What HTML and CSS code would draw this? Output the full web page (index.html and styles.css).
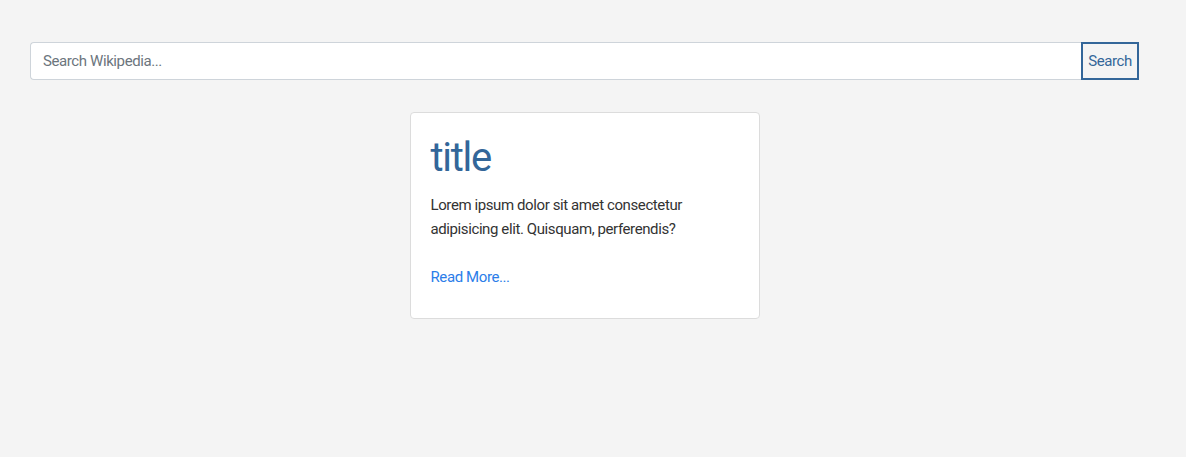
FILE: index.html
```html
<!DOCTYPE html>
<html>
<head>
<meta charset="utf-8">
<link rel="stylesheet" href="styles.css">
</head>
<body>
<div class="page">
  <form class="search">
    <input class="search-input" type="text" placeholder="Search Wikipedia...">
    <button class="search-btn" type="button">Search</button>
  </form>
  <div class="results">
    <div class="card">
      <h2 class="card-title">title</h2>
      <p class="card-text">Lorem ipsum dolor sit amet consectetur adipisicing elit. Quisquam, perferendis?</p>
      <a class="card-link" href="#">Read More...</a>
    </div>
  </div>
</div>
</body>
</html>
```
FILE: styles.css
```css
html, body {
  margin: 0;
  padding: 0;
  background: #f4f4f4;
  font-family: Roboto, "Liberation Sans", sans-serif;
}
.page {
  padding: 42px 47px 0 30px;
}
.search {
  display: flex;
  margin: 0;
}
.search-input {
  flex: 1;
  height: 38px;
  box-sizing: border-box;
  border: 1px solid #ced4da;
  border-right: none;
  border-radius: 4px 0 0 4px;
  padding: 0 12px;
  font-family: Roboto, sans-serif;
  font-size: 15px;
  letter-spacing: -0.4px;
  color: #495057;
  background: #fff;
  outline: none;
}
.search-input::placeholder {
  color: #6c757d;
}
.search-btn {
  width: 58px;
  height: 38px;
  box-sizing: border-box;
  border: 2px solid #336699;
  background: #f4f4f4;
  color: #336699;
  font-family: Roboto, sans-serif;
  font-size: 15px;
  letter-spacing: -0.4px;
  padding: 0;
}
.results {
  display: flex;
  justify-content: center;
  padding-top: 32px;
}
.card {
  width: 350px;
  box-sizing: border-box;
  background: #fff;
  border: 1px solid #dcdcdc;
  border-radius: 4px;
  padding: 21px 20px 29px;
}
.card-title {
  margin: 0 0 11px;
  font-weight: 400;
  font-size: 40px;
  line-height: 48px;
  color: #336699;
  letter-spacing: -1.3px;
}
.card-text {
  margin: 0 0 24px;
  font-size: 15px;
  line-height: 24px;
  color: #333;
  letter-spacing: -0.4px;
}
.card-link {
  font-size: 15px;
  line-height: 24px;
  color: #2b7de9;
  text-decoration: none;
  letter-spacing: -0.4px;
}
```
